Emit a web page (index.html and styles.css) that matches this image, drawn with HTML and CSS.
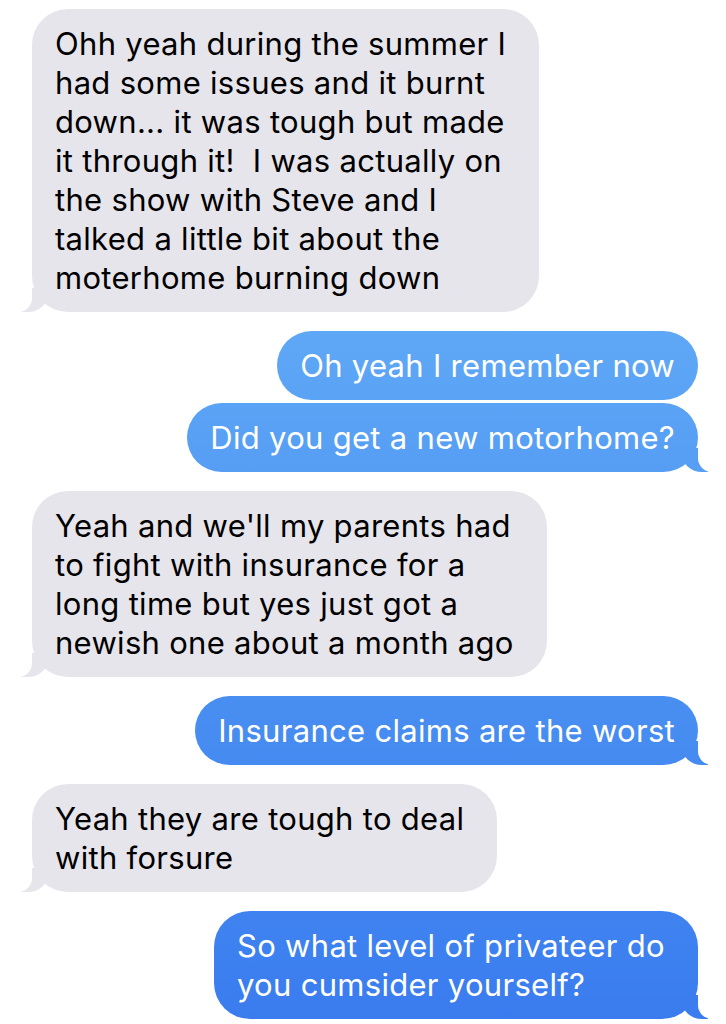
FILE: index.html
```html
<!DOCTYPE html>
<html lang="en">
<head>
  <meta charset="UTF-8" />
  <meta name="viewport" content="width=device-width, initial-scale=1.0"/>
  <title>Messages</title>

  <link rel="stylesheet" href="styles.css">
</head>
<body>
  <main class="thread">
    <p class="bubble them multi">Ohh yeah during the summer I<br>had some issues and it burnt<br>down... it was tough but made<br>it through it!&nbsp; I was actually on<br>the show with Steve and I<br>talked a little bit about the<br>moterhome burning down</p>

    <p class="bubble me no-tail">Oh yeah I remember now</p>
    <p class="bubble me stacked">Did you get a new motorhome?</p>

    <p class="bubble them multi">Yeah and we'll my parents had<br>to fight with insurance for a<br>long time but yes just got a<br>newish one about a month ago</p>

    <p class="bubble me">Insurance claims are the worst</p>

    <p class="bubble them multi">Yeah they are tough to deal<br>with forsure</p>

    <p class="bubble me multi">So what level of privateer do<br>you cumsider yourself?</p>
  </main>
</body>
</html>
```

FILE: styles.css
```css
body {
  margin: 0;
  background: #fff;
  font-family: Inter, "Noto Sans", sans-serif;
}

.thread {
  display: flex;
  flex-direction: column;
  gap: 19px;
  padding: 9px 28px 0 32px;
}

.bubble {
  position: relative;
  margin: 0;
  max-width: 520px;
  padding: 15px 23px 15px 23px;
  border-radius: 36px;
  font-size: 31px;
  line-height: 39px;
  letter-spacing: 0.3px;
}

.bubble.multi {
  padding-right: 33px;
}

.them {
  align-self: flex-start;
  background: #e6e5eb;
  color: #000;
}

.me {
  align-self: flex-end;
  color: #fff;
  background: linear-gradient(to bottom, #6cb0f7 0%, #5fa8f6 32%, #4a90f1 65%, #3a7cef 100%) fixed;
}

.stacked {
  margin-top: -16px;
}

/* tails */
.bubble::before,
.bubble::after {
  content: "";
  position: absolute;
  bottom: 0;
  height: 24px;
}

.them::before {
  left: -10px;
  width: 26px;
  background: #e6e5eb;
  border-bottom-right-radius: 20px 18px;
}

.them::after {
  left: -26px;
  width: 26px;
  background: #fff;
  border-bottom-right-radius: 14px;
}

.me::before {
  right: -10px;
  width: 26px;
  background: linear-gradient(to bottom, #6cb0f7 0%, #5fa8f6 32%, #4a90f1 65%, #3a7cef 100%) fixed;
  border-bottom-left-radius: 20px 18px;
}

.me::after {
  right: -26px;
  width: 26px;
  background: #fff;
  border-bottom-left-radius: 14px;
}

.no-tail::before,
.no-tail::after {
  display: none;
}
```
